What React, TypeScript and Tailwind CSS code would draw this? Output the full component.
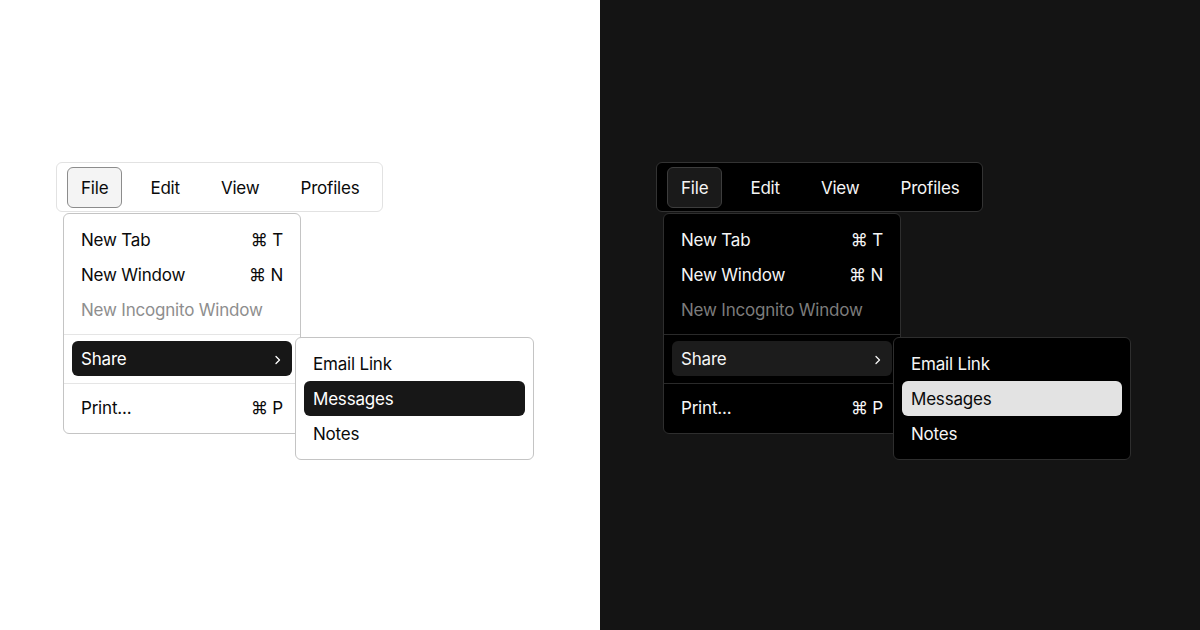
import React from "react";

type Theme = {
  page: string;
  bar: string;
  fileBtn: string;
  text: string;
  menu: string;
  sep: string;
  disabled: string;
  shareHl: string;
  msgHl: string;
  sub: string;
};

const light: Theme = {
  page: "bg-white",
  bar: "bg-white border-[#e2e2e2]",
  fileBtn: "bg-[#f4f4f4] border-[#8c8c8c]",
  text: "text-[#0a0a0a]",
  menu: "bg-white border-[#c4c4c4]",
  sep: "bg-[#e5e5e5]",
  disabled: "text-[#8e8e8e]",
  shareHl: "bg-[#171717] text-white",
  msgHl: "bg-[#171717] text-white",
  sub: "left-[239px] w-[239px]",
};

const dark: Theme = {
  page: "bg-[#141414]",
  bar: "bg-black border-[#333333]",
  fileBtn: "bg-[#1a1a1a] border-[#3d3d3d]",
  text: "text-[#f5f5f5]",
  menu: "bg-black border-[#2e2e2e]",
  sep: "bg-[#2a2a2a]",
  disabled: "text-[#7c7c7c]",
  shareHl: "bg-[#1c1c1c] text-[#f5f5f5]",
  msgHl: "bg-[#e3e3e3] text-[#0a0a0a]",
  sub: "left-[237px] w-[238px]",
};

function Chevron() {
  return (
    <svg width="8" height="12" viewBox="0 0 8 12" fill="none">
      <path d="M2 2.5 L5.5 6 L2 9.5" stroke="currentColor" strokeWidth="1.3" strokeLinecap="round" strokeLinejoin="round" />
    </svg>
  );
}

function Row({ label, shortcut, cls = "" }: { label: string; shortcut?: string; cls?: string }) {
  return (
    <div className={`flex h-[35px] items-center justify-between rounded-md px-[9px] pt-[2px] ${cls}`}>
      <span>{label}</span>
      {shortcut && <span>{shortcut}</span>}
    </div>
  );
}

function Half({ t }: { t: Theme }) {
  return (
    <div className={`h-[630px] w-[600px] ${t.page} ${t.text}`}>
      <div className="relative ml-[56px] pt-[162px]">
        <div className={`flex h-[50px] w-[327px] items-center gap-[15px] rounded-md border px-[10px] ${t.bar}`}>
          <div className={`flex h-[41px] items-center rounded-md border px-[13px] pt-[3px] ${t.fileBtn}`}>File</div>
          <div className="px-[13px] pt-[3px]">Edit</div>
          <div className="px-[13px] pt-[3px]">View</div>
          <div className="px-[13px] pt-[3px]">Profiles</div>
        </div>

        <div className={`absolute left-[7px] top-[213px] w-[238px] rounded-md border p-2 ${t.menu}`}>
          <Row label="New Tab" shortcut="⌘ T" />
          <Row label="New Window" shortcut="⌘ N" />
          <Row label="New Incognito Window" cls={t.disabled} />
          <div className={`mx-[-8px] mb-[6px] mt-[7px] h-px ${t.sep}`} />
          <div className={`flex h-[35px] items-center justify-between rounded-md pl-[9px] pr-[10px] pt-[2px] ${t.shareHl}`}>
            <span>Share</span>
            <Chevron />
          </div>
          <div className={`mx-[-8px] mb-[6px] mt-[7px] h-px ${t.sep}`} />
          <Row label="Print..." shortcut="⌘ P" />
        </div>

        <div className={`absolute top-[337px] rounded-md border p-2 ${t.sub} ${t.menu}`}>
          <Row label="Email Link" />
          <Row label="Messages" cls={t.msgHl} />
          <Row label="Notes" />
        </div>
      </div>
    </div>
  );
}

export default function App() {
  return (
    <div
      className="flex h-[630px] w-[1200px] overflow-hidden text-[17px] tracking-[-0.2px]"
      style={{ fontFamily: "Inter, 'Noto Sans', sans-serif" }}
    >
      <Half t={light} />
      <Half t={dark} />
    </div>
  );
}
